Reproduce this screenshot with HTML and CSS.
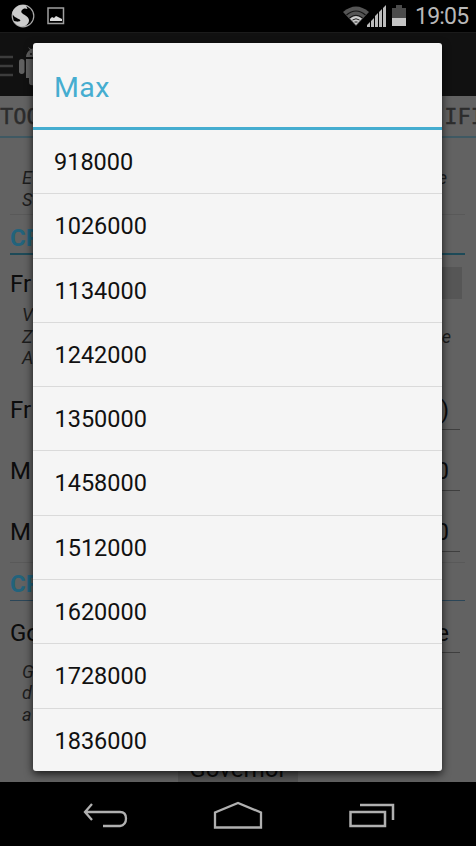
FILE: index.html
```html
<!DOCTYPE html>
<html lang="de">
<head>
  <meta charset="UTF-8" />
  <title>Max</title>
  <meta name="viewport" content="width=device-width, initial-scale=1.0"/>
  <link rel="stylesheet" href="styles.css">
</head>
<body>

<div class="phone">
  <header class="status-bar">
    <svg class="logo-icon" width="24" height="24" viewBox="0 0 24 24">
      <circle cx="12" cy="12" r="10.8" fill="none" stroke="#aaa" stroke-width="1.2"/>
      <path d="M15 1.5C9 0 3 3 1.2 9c1 4 5 5 7.5 6.5 2 1.500-1 2.500-3.200 2L2.500 17c3 5 9 7 13 4 4-3.500 3-7-1-9.500-3-2-5.500-3-3.500-5.500 1-1.500 3-2 5.500-1z" fill="#ccc"/>
    </svg>
    <svg class="picture-icon" width="18" height="18" viewBox="0 0 18 18">
      <rect x="1" y="1" width="15.500" height="15.500" fill="none" stroke="#a0a0a0" stroke-width="1.500"/>
      <path d="M3 14v-2l2-2 2 1 2-2 2 1 2 1 2 1v2z" fill="#ddd"/>
    </svg>
    <span class="spacer"></span>
    <svg class="wifi-icon" width="26" height="20" viewBox="0 0 26 20">
      <path d="M0 6Q13-5 26 6L13 20z" fill="#555"/>
      <path d="M3.500 9Q13 1 22.500 9M6.500 12Q13 6.500 19.500 12" fill="none" stroke="#151515" stroke-width="1.200"/>
      <path d="M7 12.500Q13 7.500 19 12.500L13 19z" fill="#ccc"/>
      <path d="M9.500 14q3.500-2.500 7 0M11.500 16h3" fill="none" stroke="#222" stroke-width="1"/>
    </svg>
    <svg class="signal-icon" width="19" height="22" viewBox="0 0 19 22">
      <path d="M0 22v-2l3-3v5zM4 22v-6l3-3v9zM8 22V11l3-3v14zM12 22V7l3-3v18zM16 22V3l3-3v22z" fill="#bbb"/>
    </svg>
    <svg class="battery-icon" width="14" height="21" viewBox="0 0 14 21">
      <path d="M4 0h6v3h4v18H0V3h4z" fill="#4b4b4b"/>
      <path d="M0 13h14v8H0z" fill="#c4c4c4"/>
    </svg>
    <span class="clock">19:05</span>
  </header>

  <div class="action-bar">
    <svg width="50" height="46" viewBox="0 0 50 46">
      <path d="M0 13h13M0 22h13M0 31h13" stroke="#3c3c3c" stroke-width="2.500"/>
      <path d="M26 13c0-3 2-6 4-7l-2-3 3 2c5-2 11 0 13 8zM26 15h18v19H26zM29 33h5v8q-5 1-5-3z" fill="#606060"/>
      <rect x="19" y="15" width="5.500" height="15" rx="2.700" fill="#606060"/>
      <circle cx="31" cy="10" r="1" fill="#151515"/>
    </svg>
  </div>

  <nav class="tabs">
    <span>TOO</span>
    <span>IFI</span>
  </nav>

  <main class="settings">
    <div class="hint first">
      <p><span>E</span><span>e</span></p>
      <p>S</p>
    </div>

    <h2 class="first">CP</h2>
    <div class="row toggle"><span>Fr</span><span class="switch"></span></div>
    <div class="hint">
      <p>V</p>
      <p><span>Z</span><span class="far">e</span></p>
      <p>A</p>
    </div>
    <div class="row frequency"><span>Fr</span><span class="spinner">)</span></div>
    <div class="row"><span>M</span><span class="spinner">0</span></div>
    <div class="row last"><span>M</span><span class="spinner">0</span></div>

    <h2 class="thin">CP</h2>
    <div class="row governor"><span>Go</span><span class="spinner">e</span></div>
    <div class="hint">
      <p>G</p>
      <p>d</p>
      <p>a</p>
    </div>
    <div class="button">Governor</div>
  </main>

  <nav class="nav-bar">
    <svg width="46" height="26" viewBox="0 0 46 26">
      <path d="M9 2L2 10l7 8M2 10h35q6 0 6 6.500T37 24H20" fill="none" stroke="#b0b0b0" stroke-width="2.300"/>
    </svg>
    <svg width="50" height="28" viewBox="0 0 50 28">
      <path d="M2 26.500V11.500L25 2l23 9.500v15z" fill="none" stroke="#b0b0b0" stroke-width="2.300"/>
    </svg>
    <svg width="46" height="26" viewBox="0 0 46 26">
      <path d="M1.500 10h34.500v14H1.500zM11 3h33v15" fill="none" stroke="#b0b0b0" stroke-width="2.500"/>
    </svg>
  </nav>

  <div class="dialog">
    <h1>Max</h1>
    <ul>
      <li>918000</li>
      <li>1026000</li>
      <li>1134000</li>
      <li>1242000</li>
      <li>1350000</li>
      <li>1458000</li>
      <li>1512000</li>
      <li>1620000</li>
      <li>1728000</li>
      <li>1836000</li>
    </ul>
  </div>
</div>

</body>
</html>
```
FILE: styles.css
```css
* {
  box-sizing: border-box;
}

body {
  margin: 0;
  background-color: #000;
  font-family: Roboto, sans-serif;
}

h1, h2, p, ul {
  margin: 0;
  padding: 0;
}

.phone {
  position: relative;
  width: 476px;
  height: 846px;
  display: flex;
  flex-direction: column;
  overflow: hidden;
}

.status-bar {
  height: 32px;
  padding: 0 9px 0 11px;
  display: flex;
  align-items: center;
  background-color: #000;
}

.picture-icon {
  margin-left: 12px;
}

.spacer {
  flex: 1;
}

.signal-icon {
  margin: 0 6px 0 -2px;
}

.battery-icon {
  margin: -2px 9px 0 0;
}

.clock {
  font-size: 23px;
  line-height: 32px;
  padding-top: 2px;
  width: 52px;
  letter-spacing: -0.8px;
  white-space: nowrap;
  color: #b8b8b8;
}

.action-bar {
  height: 64px;
  padding-top: 11px;
  background-color: #111;
  border-top: 1px solid #1b1b1b;
}

.tabs {
  height: 42px;
  display: flex;
  justify-content: space-between;
  background-color: #626262;
  border-bottom: 2px solid #3f5963;
  font-family: "DejaVu Sans Mono", monospace;
  font-size: 22px;
  line-height: 42px;
  color: #2c2c2c;
  -webkit-text-stroke: 0.4px #2c2c2c;
}

.tabs span:last-child {
  margin-right: -8px;
}

/* settings page, dimmed behind the dialog */
.settings {
  height: 644px;
  overflow: hidden;
  padding: 29px 11px 0 10px;
  background-color: #626262;
  color: #0c0c0c;
}

.settings h2 {
  height: 31px;
  font-size: 24px;
  line-height: 28px;
  color: #22637c;
  border-bottom: 2px solid #1d4a58;
}

.settings h2.first {
  margin-top: 9px;
}

.settings h2.thin {
  margin-top: 7px;
  border-bottom: 1px solid #2b4658;
}

.hint {
  padding: 0 18px 0 12px;
  font-size: 18px;
  font-style: italic;
  line-height: 21.5px;
  color: #1d1d1d;
}

.hint p {
  display: flex;
  justify-content: space-between;
}

.hint.first {
  height: 48px;
  border-bottom: 1px solid #595959;
}

.far {
  margin-right: -4px;
}

.row {
  height: 61px;
  padding-right: 5px;
  display: flex;
  justify-content: space-between;
  font-size: 24px;
  line-height: 38px;
}

.row.toggle {
  height: 49px;
  padding: 10px 3px 0 0;
}

.switch {
  width: 120px;
  height: 32px;
  margin-top: 2px;
  background-color: #565656;
}

.row.frequency {
  margin-top: 22px;
}

.row.last {
  height: 50px;
  border-bottom: 1px solid #595959;
}

.spinner {
  width: 120px;
  height: 39px;
  padding-right: 11px;
  text-align: right;
  border-bottom: 1px solid #3f3f3f;
}

.row.governor {
  height: 47px;
  margin-top: 13px;
}

.button {
  width: 120px;
  height: 60px;
  margin: 23px auto 0 168px;
  font-size: 24px;
  line-height: 43px;
  text-align: center;
  background-color: #555;
}

.nav-bar {
  height: 64px;
  padding: 2px 81px 0 83px;
  display: flex;
  justify-content: space-between;
  align-items: center;
  background-color: #000;
}

.nav-bar svg:nth-child(2) {
  margin-right: 3px;
}

.dialog {
  position: absolute;
  left: 33px;
  top: 43px;
  width: 409px;
  height: 728px;
  background-color: #f5f5f5;
  border-radius: 3px;
  box-shadow: 0 3px 9px rgba(0, 0, 0, 0.75);
}

.dialog h1 {
  height: 87px;
  padding-left: 21px;
  font-size: 28.5px;
  font-weight: normal;
  letter-spacing: 0.4px;
  line-height: 89px;
  color: #45add0;
  border-bottom: 3px solid #45add0;
}

.dialog ul {
  list-style: none;
}

.dialog li {
  height: 64.3px;
  padding-left: 21.5px;
  font-size: 23.5px;
  line-height: 64px;
  color: #111;
  border-bottom: 1px solid #dadada;
}

.dialog li:first-child {
  padding-left: 21px;
}

.dialog li:last-child {
  border-bottom: none;
}
```
